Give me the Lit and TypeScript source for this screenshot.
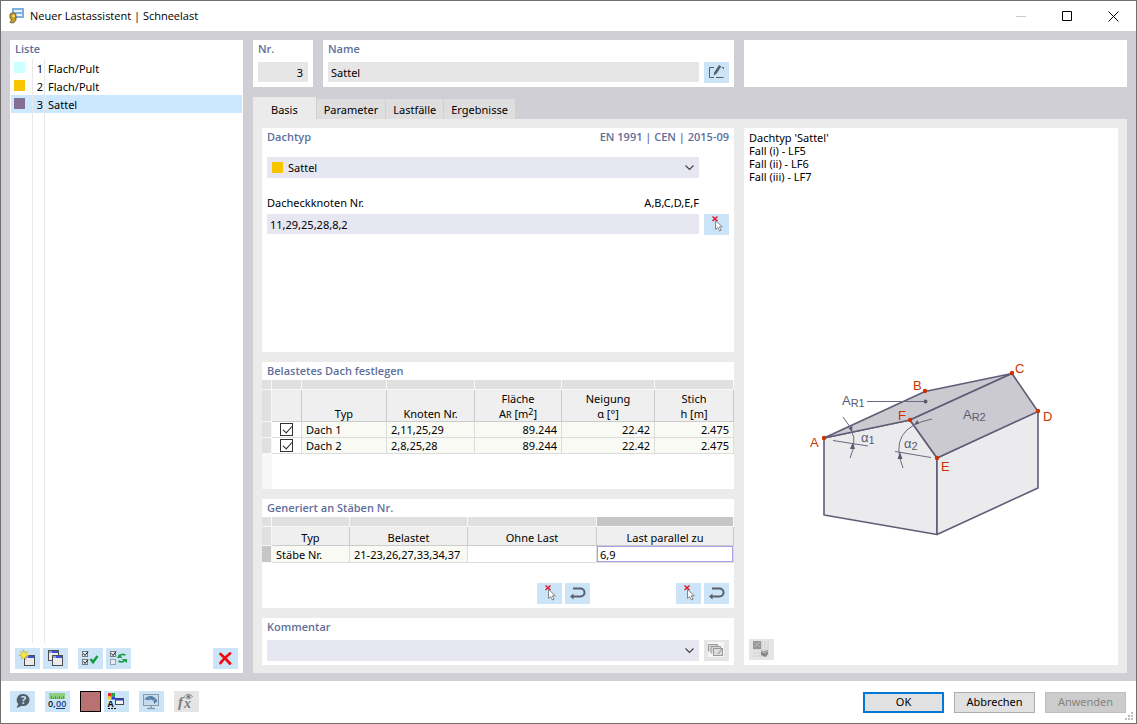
import { LitElement, html, svg, css } from "lit";
import { customElement, property, state } from "lit/decorators.js";
import { classMap } from "lit/directives/class-map.js";

const win = (x: number, y: number) => svg`
  <rect x=${x + 0.5} y=${y + 0.5} width="10" height="10" fill="#ebebeb" stroke="#4d4d4d"/>
  <rect x=${x + 1} y=${y + 1} width="9" height="2" fill="#3c50dc"/>
  <rect x=${x + 1} y=${y + 1} width="3" height="2" fill="#9a9ad8"/>`;

const box = (y: number, checked: boolean) => svg`
  <rect x="4.5" y=${y + 0.5} width="5" height="5" fill="#e4eef6" stroke=${checked ? "#7a7a7a" : "#9aa2aa"}/>
  ${checked ? svg`<path d=${`M5.5 ${y + 2.5}l1.5 2 3-4`} fill="none" stroke="#222" stroke-width="1"/>` : ""}`;

const icons: Record<string, unknown> = {
  add: svg`${win(9, 7)}
    <path d="M8.500 1.500l1.100 3.300 3.300-1.400-1.700 3 2.800 1.500-3.300.4.300 3.300-2.300-2.300-2.600 2.100.9-3.200-3.100-.8 3-1.300-1.300-2.900 2.600 1.400z" fill="#f4e84a" stroke="#c8a400" stroke-width=".5"/>`,
  copy: svg`${win(5, 2)}${win(9, 7)}`,
  checkAll: svg`${box(3, true)}${box(11, true)}
    <path d="M12.500 11l2.500 3.200L19.500 8" fill="none" stroke="#149b41" stroke-width="2.400"/>`,
  toggle: svg`${box(3, true)}${box(11, false)}
    <path d="M13 8.500c1.500-2.500 4-2.500 6.500-1.500" fill="none" stroke="#1fa04a" stroke-width="1.800"/>
    <path d="M11 10h5.500l-3.500-4z" fill="#1fa04a"/>
    <path d="M12.500 13c2 1.500 5 1.200 6.500-1" fill="none" stroke="#1fa04a" stroke-width="1.800"/>
    <path d="M15.500 11H21v4z" fill="#1fa04a"/>`,
  remove: svg`<path d="M7.500 6c3.500 3 6.500 6 9.500 9.500M17 5.500c-4 3-7 6-9.500 9.500" fill="none" stroke="#f00a0a" stroke-width="2.800" stroke-linecap="round"/>`,
  help: svg`<path d="M13.500 3a6 6 0 1 1-1.500 11.800L6.500 17l1.800-4A6 6 0 0 1 13.500 3z" fill="#555f69"/>
    <text x="13.500" y="13" text-anchor="middle" font-size="11" font-weight="700" fill="#cce4f7">?</text>`,
  units: svg`<rect x="4" y="2" width="16" height="6" fill="#90cf80"/>
    <path d="M6.500 5v3M8.500 6v2M10.500 5v3M12.500 6v2M14.500 5v3M16.500 6v2M18.500 5v3" stroke="#4f9c47"/>
    <text x="3" y="16" font-size="9" font-weight="600" fill="#111">0,</text><text x="11" y="16" font-size="9" font-weight="600" fill="#1c3d85">00</text>
    <path d="M11 17.500h9" stroke="#1c3d85"/>`,
  display: svg`<rect x="4" y="2" width="3.500" height="3.500" fill="#e8261e"/><rect x="7.500" y="2" width="3.500" height="3.500" fill="#1fa83c"/>
    <rect x="4" y="5.500" width="3.500" height="3" fill="#f7d21c"/><rect x="7.500" y="5.500" width="3.500" height="3" fill="#2739d8"/>
    <text x="3.500" y="16" font-size="9" font-weight="700" fill="#111">A</text><path d="M4 17.500h8" stroke="#111" stroke-dasharray="2 1"/>
    <rect x="11.500" y="7.500" width="8" height="6" fill="#f2f2f2" stroke="#4d4d4d"/><path d="M12 8.500h7" stroke="#2b3fb4" stroke-width="2"/>`,
  monitor: svg`<rect x="4.500" y="3.500" width="15" height="11" fill="#c4dcef" stroke="#8c9aa6"/>
    <path d="M12 15v2M8 17.500h8" stroke="#8c9aa6" stroke-width="1.500"/>
    <path d="M5.500 8.500C8 4 15 3.500 18.500 10l-3.500 3c.5-3-2-5-4.500-3.800z" fill="#557fa6"/>
    <path d="M9 6.500l3 2.500M16.500 7.500L14 10" fill="none" stroke="#abc7de" stroke-width=".6"/>`,
  formula: svg`<text x="4" y="16" font-size="15" font-style="italic" font-weight="700" font-family="Liberation Serif, serif" fill="#7c7c7c">f</text>
    <text x="10" y="17" font-size="14" font-style="italic" font-weight="700" font-family="Liberation Serif, serif" fill="#7c7c7c">x</text>
    <path d="M10.500 5.500c2.500-3 5.500-3 8 0-2.500 3-5.500 3-8 0z" fill="#dadada" stroke="#858585"/><circle cx="14.500" cy="5.500" r="1.600" fill="#777"/>`,
  edit: svg`<path d="M10 5.500H5.500v10H10M12 15.500h7.500M18 5.500h1.500V7" fill="none" stroke="#5a6068"/>
    <path d="M9.500 13.500l.8-3.300L15 3l2.300 1.500-4.800 7.300z" fill="#5a6068"/>`,
  pick: svg`<path d="M8.500 2.500l5 4.500M13.500 2.500l-5 4.500" stroke="#e81123" stroke-width="1.400"/>
    <path d="M11.500 6.500v9l2.200-2 1.800 3.500 1.600-.8-1.800-3.400h3z" fill="#fff" stroke="#858585"/>`,
  back: svg`<path d="M8 5.500h7.500a4 4 0 0 1 0 8H8" fill="none" stroke="#596069" stroke-width="2"/>
    <path d="M5 13.500l3.500-3v6z" fill="#596069"/>`,
  library: svg`<rect x="4" y="2" width="16" height="15" fill="#f6f6f6"/>
    <path d="M4.500 11.500v-7h9v2M7 13.500v-7h9.500v2" fill="#d6d6d6" stroke="#999"/><rect x="9.500" y="8.500" width="9" height="7" fill="#dcdcdc" stroke="#999"/>
    <path d="M14 14l4-5" stroke="#888"/>`,
  render: svg`<rect x="4" y="2" width="16" height="16" fill="#d8d8d8"/>
    <rect x="4" y="2" width="8" height="8" fill="#959595"/><path d="M5 3l6 5M11 3L5 8" stroke="#bcbcbc"/>
    <path d="M4 12.500h16M4 15.500h16M14.500 2v8M17.500 2v8M7.500 10v8" fill="none" stroke="#e6e6e6"/>
    <path d="M12 11l3 1.500 4-1.500v4l-2.500 3-4.500-2z" fill="#858585"/><path d="M12 12l4 2 3-2" stroke="#c8c8c8" fill="none"/>`,
};

@customElement("tool-button")
class ToolButton extends LitElement {
  @property() icon = "";
  @property() label = "";
  @property({ type: Boolean }) disabled = false;

  static styles = css`
    :host { display: block; flex: none; }
    button { display: block; width: 25px; height: 21px; padding: 0; border: 0; background: #cce4f7; }
    button:disabled { background: #e5e5e5; }
    svg { display: block; font-family: "Open Sans", sans-serif; }
  `;

  render() {
    return html`<button aria-label=${this.label} ?disabled=${this.disabled}>
      <svg width="25" height="21" viewBox="0 0 25 21" aria-hidden="true">${icons[this.icon]}</svg>
    </button>`;
  }
}

@customElement("roof-diagram")
class RoofDiagram extends LitElement {
  static styles = css`
    :host { display: block; }
    svg { display: block; width: 100%; max-width: 270px; margin: 0 auto; font: 13px "Liberation Sans", sans-serif; }
    .edge { stroke: #5f5d75; stroke-width: 1.6; stroke-linejoin: round; }
    .thin { stroke: #6a6980; stroke-width: 1; fill: none; }
    .mark { fill: #5b5a72; }
    .node { fill: #cc3300; }
    .sub { font-size: 11px; }
  `;

  render() {
    const nodes: [string, number, number, number, number][] = [
      ["A", 24, 88, 10, 97], ["B", 125, 41, 113, 40], ["C", 212, 23, 215, 23],
      ["D", 238, 61, 243, 71], ["E", 137, 108, 141, 121], ["F", 110, 70, 98, 70],
    ];
    return html`<svg viewBox="-4 0 270 200" role="img" aria-label="Satteldach">
      <path class="edge" fill="#ebebed" d="M24 88V165L137 184.500V108L110 70z"/>
      <path class="edge" fill="#ebebed" d="M137 108V184.500L238 138V61z"/>
      <path class="edge" fill="#cbcad0" d="M24 88L125 41.500 212 23.500 110 70z"/>
      <path class="edge" fill="#cbcad0" d="M110 70L212 23.500 238 61.500 137 108z"/>
      <path class="thin" d="M67 51.500h58M33 90.500L68 96M43 67q18 20 7 41M95 101.500L131 107.500M132 69q-45 9-29 49"/>
      <circle class="mark" cx="125.500" cy="51.500" r="2"/>
      <path class="mark" d="M52 82l-3.500-4 4-2zM52.500 93l-2.500 6h5zM114.500 74l3-4 1.500 4zM100 102l-2.500 7h5z"/>
      ${nodes.map(([n, x, y, tx, ty]) => svg`<circle class="node" cx=${x} cy=${y} r="2.200"/><text class="node" x=${tx} y=${ty}>${n}</text>`)}
      <g class="mark">
        <text x="42" y="55">A<tspan class="sub" dy="2">R1</tspan></text>
        <text x="163" y="69">A<tspan class="sub" dy="2">R2</tspan></text>
        <text x="61" y="92">α<tspan class="sub" dy="2">1</tspan></text>
        <text x="104" y="98">α<tspan class="sub" dy="2">2</tspan></text>
      </g>
    </svg>`;
  }
}

@customElement("app-root")
class AppRoot extends LitElement {
  @state() tab = "Basis";
  @state() selected = 3;

  static styles = css`
    :host {
      display: flex; flex-direction: column; box-sizing: border-box; min-height: 100vh;
      border: 1px solid #707070; background: #fff; color: #000;
      font: 11px/16px "Noto Sans", "Open Sans", sans-serif;
    }
    * { box-sizing: border-box; }
    button, input, select { font: inherit; color: inherit; margin: 0; border-radius: 0; }
    h1, h2 { margin: 0; font-size: inherit; }
    h2, .caption { font-weight: 600; font-family: "Open Sans", sans-serif; color: #5f6f9b; line-height: 18px; }
    .title { display: flex; align-items: center; height: 30px; padding-left: 8px; }
    .title h1 { flex: 1; margin-left: 5px; font: 11px/16px "Open Sans", sans-serif; }
    .title button { width: 46px; height: 28px; padding: 0; border: 0; background: none; }
    .title svg { display: block; margin: 0 auto; }
    .title .logo { margin: 0; }
    .body { flex: 1; display: grid; grid-template-columns: 233px minmax(0, 1fr); gap: 10px; padding: 9px 9px 8px; background: #d0cfd5; }
    .panel { background: #fff; padding: 0 5px; min-width: 0; }
    .list { display: flex; flex-direction: column; padding: 0; }
    .list h2 { padding-left: 5px; }
    .items { flex: 1; display: flex; flex-direction: column; margin: 1px 1px 0; }
    .item { display: grid; grid-template-columns: 22px 12px 1fr; align-items: stretch; height: 18px; padding: 0; border: 0; background: none; text-align: left; line-height: 20px; }
    .item.on { background: #cce8ff; }
    .item span { border-right: 1px solid #e8e8e8; text-align: right; }
    .item span + span { padding-right: 1px; }
    .item b { padding-left: 3px; font-weight: 400; }
    .rails { flex: 1; display: grid; grid-template-columns: 22px 12px; }
    .rails i { border-right: 1px solid #e8e8e8; }
    .swatch { display: block; width: 11px; height: 11px; }
    .item .swatch { margin: 3px; }
    .tools { display: flex; gap: 3px; padding: 5px 5px 4px; }
    .tools .gap { margin-left: 7px; }
    .tools .end { margin-left: auto; }
    .main { display: flex; flex-direction: column; min-width: 0; }
    .top { display: grid; grid-template-columns: 60px minmax(0, 411px) minmax(0, 1fr); gap: 10px; height: 47px; }
    .row { display: flex; gap: 5px; }
    .field { display: block; width: 100%; min-width: 0; height: 20px; padding: 0 3px; border: 0; background: #e7e7f1; }
    .field.ro { background: #e6e6e6; }
    .field.num { text-align: right; padding-right: 5px; }
    .top .row, .top .num { margin-top: 4px; }
    .tabs { display: flex; align-items: flex-end; gap: 1px; margin-top: 10px; height: 22px; }
    .tab { height: 20px; padding: 2px 7px 0; border: 0; background: #dedede; line-height: 16px; }
    .tab.on { height: 22px; padding: 3px 18px 0; background: #ebebeb; }
    .page { flex: 1; display: grid; grid-template-columns: minmax(0, 472px) minmax(0, 1fr); gap: 10px; padding: 9px 9px 8px; background: #ebebeb; }
    .form { display: flex; flex-direction: column; gap: 10px; min-width: 0; }
    .roof { flex: 1; }
    .caption { display: flex; justify-content: space-between; }
    .combo { flex: 1; display: flex; align-items: center; gap: 5px; height: 21px; padding: 0 5px; background: #e7e7f1; }
    .combo select { flex: 1; min-width: 0; height: 21px; padding: 0; border: 0; background: none; appearance: none; }
    .roof .row { margin-top: 11px; padding-right: 30px; }
    .roof .labels { margin-top: 17px; padding-right: 30px; display: flex; justify-content: space-between; }
    .roof .nodes { margin-top: 3px; padding-right: 0; }
    .grid { padding: 0; }
    .grid h2 { padding-left: 5px; }
    table { width: 100%; table-layout: fixed; border-collapse: separate; border-spacing: 0; }
    th, td { padding: 0 4px; border-right: 1px solid #dcdcdc; border-bottom: 1px solid #dcdcdc; font-weight: 400; white-space: nowrap; }
    th { padding-top: 1px; background: #efefef; border-color: #cbcbcb; vertical-align: bottom; line-height: 15px; }
    td { background: #f9faf4; height: 16px; line-height: 14px; padding-top: 1px; }
    .bars tbody td { height: 17px; }
    .strip td { height: 10px; padding: 0; background: #e0e0e0; border-color: #f8f8f8; }
    tr > :first-child { background: #e0e0e0; border-color: #f8f8f8; padding: 0; }
    .white { background: #fff; }
    td.white { padding-top: 0; }
    .n { text-align: right; }
    .strip .active, tr > .active:first-child { background: #c6c6c6; }
    sub, sup { font-size: 9px; line-height: 0; }
    sub { vertical-align: baseline; }
    sup { vertical-align: 3px; }
    .tick { display: block; appearance: none; width: 13px; height: 13px; margin: 0 auto; border: 1px solid #333; background: #fff; }
    .tick:checked::after { content: ""; display: block; width: 8px; height: 4px; margin: 2px 0 0 2px; border-left: 1px solid #222; border-bottom: 1px solid #222; transform: rotate(-48deg); }
    .rest { width: 10px; height: 35px; background: #f7f7f7; }
    .head2 th { height: 19px; padding-top: 2px; }
    td.edit { padding: 0; background: #fff; }
    .edit input { display: block; width: 100%; height: 16px; padding: 0 2px; border: 1px solid #a5a2ea; outline: 0; }
    .picks { display: flex; justify-content: flex-end; gap: 3px; padding: 20px 5px 4px; }
    .picks .split { margin-left: 83px; }
    .comment .row { margin: 4px 0; }
    .view { display: flex; flex-direction: column; }
    .view p { margin: 3px 0 0; line-height: 13px; }
    .view roof-diagram { margin: auto 0 89px; }
    .view tool-button { padding-bottom: 5px; }
    .foot { position: relative; display: flex; align-items: center; gap: 10px; height: 42px; padding: 0 10px 0 9px; }
    .foot tool-button, .foot .color { margin-bottom: 2px; }
    .foot .color { width: 21px; height: 21px; padding: 0; border: 1px solid #000; background: #b97171; }
    .foot .near { margin-left: -7px; }
    .foot .push { width: 81px; height: 21px; padding: 0; border: 1px solid #adadad; background: #e1e1e1; }
    .foot .ok { margin-left: auto; border: 2px solid #0078d7; }
    .foot .push:disabled { background: #ccc; border-color: #bfbfbf; color: #838383; }
    .grip { position: absolute; right: 3px; bottom: 3px; }
  `;

  private chevron = svg`<svg width="9" height="6" viewBox="0 0 9 6" aria-hidden="true"><path d="M.5.500l4 4 4-4" fill="none" stroke="#444" stroke-width="1.200"/></svg>`;

  private roofs = [
    { name: "Dach 1", nodes: "2,11,25,29", area: "89.244", slope: "22.42", rise: "2.475" },
    { name: "Dach 2", nodes: "2,8,25,28", area: "89.244", slope: "22.42", rise: "2.475" },
  ];

  private entries = [
    { id: 1, name: "Flach/Pult", color: "#ccffff" },
    { id: 2, name: "Flach/Pult", color: "#f6c500" },
    { id: 3, name: "Sattel", color: "#836f91" },
  ];

  render() {
    return html`
      <header class="title">
        <svg class="logo" width="16" height="16" viewBox="0 0 16 16" aria-hidden="true">
          <path d="M3 0h12v10H7l-4 3z" fill="#7fb0dc"/><path d="M5 2h8v2H5zM5 6h8v2H5z" fill="#e9f3fb"/>
          <path d="M1 6l3-1.500 3 2V12l-2.500 3L1 14.500 2.500 12 1 10z" fill="#c79c1c" stroke="#5e5130" stroke-width=".8"/><circle cx="4.500" cy="8" r="1.200" fill="#f6e9a0"/>
        </svg>
        <h1>Neuer Lastassistent | Schneelast</h1>
        <button aria-label="Minimieren" disabled><svg width="10" height="10"><path d="M0 5.500h10" stroke="#ccc"/></svg></button>
        <button aria-label="Maximieren"><svg width="10" height="10"><path d="M.5.500h9v9h-9z" fill="none" stroke="#000"/></svg></button>
        <button aria-label="Schließen"><svg width="11" height="11"><path d="M.5.500l10 10M10.500.500l-10 10" stroke="#000"/></svg></button>
      </header>

      <div class="body">
        <section class="panel list">
          <h2>Liste</h2>
          <div class="items">
            ${this.entries.map((e) => html`
              <button class=${classMap({ item: true, on: e.id === this.selected })} @click=${() => (this.selected = e.id)}>
                <span><i class="swatch" style="background:${e.color}"></i></span><span>${e.id}</span><b>${e.name}</b>
              </button>`)}
            <div class="rails"><i></i><i></i></div>
          </div>
          <div class="tools">
            <tool-button icon="add" label="Neu"></tool-button>
            <tool-button icon="copy" label="Kopieren"></tool-button>
            <tool-button class="gap" icon="checkAll" label="Alle auswählen"></tool-button>
            <tool-button icon="toggle" label="Auswahl umkehren"></tool-button>
            <tool-button class="end" icon="remove" label="Löschen"></tool-button>
          </div>
        </section>

        <main class="main">
          <div class="top">
            <section class="panel">
              <label class="caption" for="no">Nr.</label>
              <input id="no" class="field ro num" readonly .value=${"3"}>
            </section>
            <section class="panel">
              <label class="caption" for="name">Name</label>
              <div class="row"><input id="name" class="field ro" readonly .value=${"Sattel"}><tool-button icon="edit" label="Bearbeiten"></tool-button></div>
            </section>
            <section class="panel"></section>
          </div>

          <nav class="tabs" role="tablist">
            ${["Basis", "Parameter", "Lastfälle", "Ergebnisse"].map((t) => html`
              <button role="tab" aria-selected=${t === this.tab ? "true" : "false"}
                class=${classMap({ tab: true, on: t === this.tab })} @click=${() => (this.tab = t)}>${t}</button>`)}
          </nav>

          <div class="page">
            <div class="form">
              <section class="panel roof">
                <h2 class="caption"><span>Dachtyp</span><span>EN 1991 | CEN | 2015-09</span></h2>
                <div class="row">
                  <div class="combo">
                    <i class="swatch" style="background:#f6c500"></i>
                    <select aria-label="Dachtyp"><option>Sattel</option></select>${this.chevron}
                  </div>
                </div>
                <div class="labels"><label for="corners">Dacheckknoten Nr.</label><span>A,B,C,D,E,F</span></div>
                <div class="row nodes">
                  <input id="corners" class="field" .value=${"11,29,25,28,8,2"}>
                  <tool-button icon="pick" label="Knoten wählen"></tool-button>
                </div>
              </section>

              <section class="panel grid">
                <h2>Belastetes Dach festlegen</h2>
                <table>
                  <colgroup><col width="10"><col width="30"><col width="85"><col width="88"><col width="87"><col width="93"><col></colgroup>
                  <thead>
                    <tr class="strip"><td></td><td></td><td></td><td></td><td></td><td></td><td></td></tr>
                    <tr><th></th><th></th><th>Typ</th><th>Knoten Nr.</th>
                      <th>Fläche<br>A<sub>R</sub> [m<sup>2</sup>]</th><th>Neigung<br>α [°]</th><th>Stich<br>h [m]</th></tr>
                  </thead>
                  <tbody>
                    ${this.roofs.map((r) => html`<tr>
                      <td></td><td class="white"><input class="tick" type="checkbox" aria-label=${r.name} checked></td>
                      <td>${r.name}</td><td>${r.nodes}</td><td class="n">${r.area}</td><td class="n">${r.slope}</td><td class="n">${r.rise}</td>
                    </tr>`)}
                  </tbody>
                </table>
                <div class="rest"></div>
              </section>

              <section class="panel grid">
                <h2>Generiert an Stäben Nr.</h2>
                <table class="bars">
                  <colgroup><col width="10"><col width="78"><col width="118"><col width="129"><col></colgroup>
                  <thead>
                    <tr class="strip"><td></td><td></td><td></td><td></td><td class="active"></td></tr>
                    <tr class="head2"><th></th><th>Typ</th><th>Belastet</th><th>Ohne Last</th><th>Last parallel zu</th></tr>
                  </thead>
                  <tbody>
                    <tr><td class="active"></td><td>Stäbe Nr.</td><td>21-23,26,27,33,34,37</td><td class="white"></td>
                      <td class="edit"><input aria-label="Last parallel zu" .value=${"6,9"}></td></tr>
                  </tbody>
                </table>
                <div class="picks">
                  <tool-button icon="pick" label="Stäbe ohne Last wählen"></tool-button>
                  <tool-button icon="back" label="Zurücksetzen"></tool-button>
                  <tool-button class="split" icon="pick" label="Parallele Stäbe wählen"></tool-button>
                  <tool-button icon="back" label="Zurücksetzen"></tool-button>
                </div>
              </section>

              <section class="panel comment">
                <label class="caption" for="comment">Kommentar</label>
                <div class="row">
                  <div class="combo"><select id="comment"><option></option></select>${this.chevron}</div>
                  <tool-button icon="library" label="Kommentare" disabled></tool-button>
                </div>
              </section>
            </div>

            <section class="panel view">
              <p>Dachtyp 'Sattel'<br>Fall (i) - LF5<br>Fall (ii) - LF6<br>Fall (iii) - LF7</p>
              <roof-diagram></roof-diagram>
              <tool-button icon="render" label="Darstellung" disabled></tool-button>
            </section>
          </div>
        </main>
      </div>

      <footer class="foot">
        <tool-button icon="help" label="Hilfe"></tool-button>
        <tool-button icon="units" label="Einheiten"></tool-button>
        <button class="color" aria-label="Farbe"></button>
        <tool-button class="near" icon="display" label="Anzeige"></tool-button>
        <tool-button icon="monitor" label="Ansicht"></tool-button>
        <tool-button icon="formula" label="Formel" disabled></tool-button>
        <button class="push ok">OK</button>
        <button class="push">Abbrechen</button>
        <button class="push" disabled>Anwenden</button>
        <svg class="grip" width="8" height="8" aria-hidden="true"><path d="M6 0h2v2H6zM3 3h2v2H3zM6 3h2v2H6zM0 6h2v2H0zM3 6h2v2H3zM6 6h2v2H6z" fill="#bfbfbf"/></svg>
      </footer>
    `;
  }
}
